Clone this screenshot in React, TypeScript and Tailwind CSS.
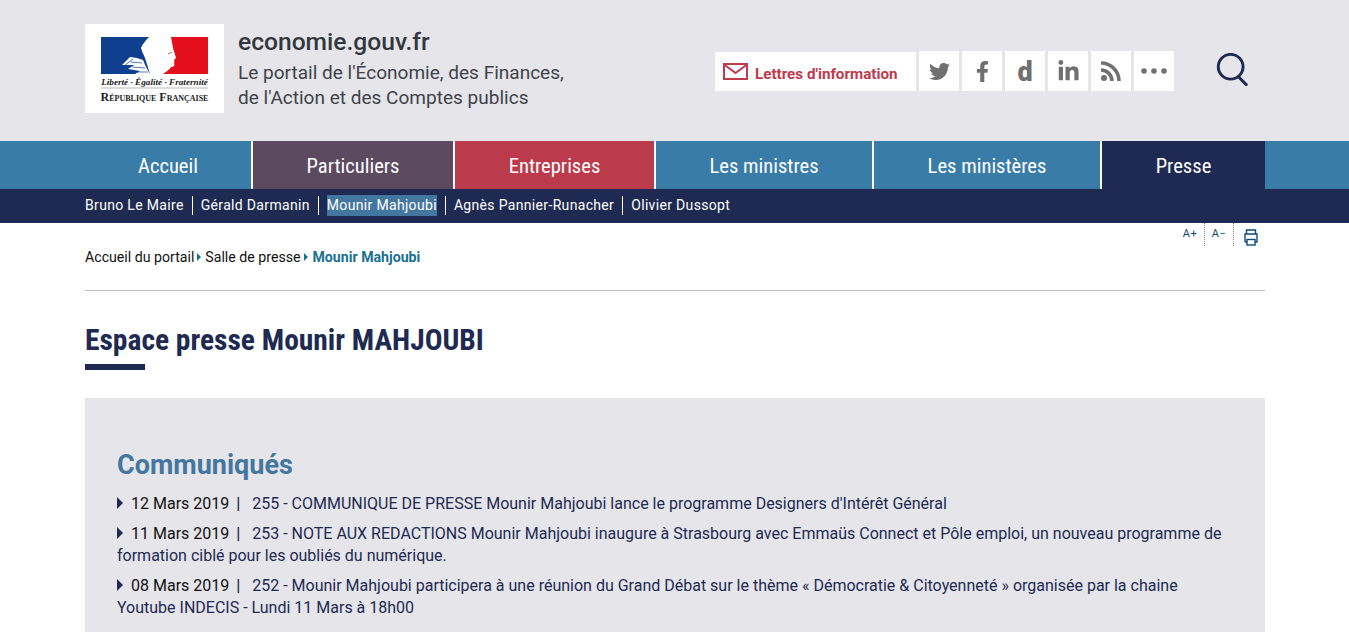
import { FaTwitter, FaFacebookF, FaLinkedinIn } from "react-icons/fa";

const navItems = [
  { label: "Accueil", width: "w-[166px]", bg: "bg-[#3a7ca8]" },
  { label: "Particuliers", width: "w-[202px]", bg: "bg-[#5c4a60]" },
  { label: "Entreprises", width: "w-[201px]", bg: "bg-[#bb3b4c]" },
  { label: "Les ministres", width: "w-[218px]", bg: "bg-[#3a7ca8]" },
  { label: "Les ministères", width: "w-[228px]", bg: "bg-[#3a7ca8]" },
  { label: "Presse", width: "w-[165px]", bg: "bg-[#1e2a52]" },
];

const subItems = ["Bruno Le Maire", "Gérald Darmanin", "Mounir Mahjoubi", "Agnès Pannier-Runacher", "Olivier Dussopt"];

const Logo = () => (
  <div className="w-[139px] h-[89px] bg-white flex flex-col items-center pt-[13px] shrink-0">
    <svg width="107" height="37" viewBox="0 0 107 37">
      <rect width="107" height="37" fill="#fff" />
      <path d="M0 0H48C44 4 41 8 40 11C41 15 43 18 44 21L49 37H0Z" fill="#0f3f8f" />
      <path d="M70 0H107V37H62C66 34 69 32 70 30C73 30 74 28 73 26C74 25 73 24 73 23L75 21L72 11Z" fill="#e30f1a" />
      <path d="M21 28L29 20L36 21L42 23L45 30L49 37H34L39 34L27 32L33 28Z" fill="#fff" />
      <path d="M23 29L32 22M30 25L41 26M31 30L44 31M36 35L47 35" stroke="#0f3f8f" strokeWidth="0.7" fill="none" />
      <path d="M67 17L71 15" stroke="#9a9a9a" strokeWidth="1.2" />
    </svg>
    <div className="mt-[2px] w-[107px] h-[13px] border-b-2 border-[#dcdcdc] text-[9.2px] leading-[12px] italic font-bold text-[#222] text-center whitespace-nowrap font-['Liberation_Serif',serif]">
      Liberté · Égalité · Fraternité
    </div>
    <div className="mt-[2px] text-[12px] leading-[13px] font-bold text-[#222] whitespace-nowrap [font-variant:small-caps] font-['Liberation_Serif',serif]">
      République Française
    </div>
  </div>
);

const SocialBox = ({ children }: { children: React.ReactNode }) => (
  <div className="w-10 h-10 bg-white flex items-center justify-center text-[#707070]">{children}</div>
);

const Communique = ({ date, text }: { date: string; text: string }) => (
  <p className="text-base leading-[22px] text-[#1e2a52] mb-2">
    <span className="inline-block align-[0px] w-0 h-0 border-y-[6px] border-y-transparent border-l-[6px] border-l-[#1e2a52] mr-2" />
    <span className="text-[#111]">{date}</span>
    <span className="font-bold ml-[7px] mr-[8px]">|</span> {text}
  </p>
);

export default function App() {
  return (
    <div className="h-[632px] overflow-hidden bg-white font-['Roboto',sans-serif]">
      <header className="h-[141px] bg-[#e5e5ea] pl-[85px] pt-6 flex">
        <Logo />
        <div className="ml-[14px] pt-[3px] w-[380px]">
          <div className="text-[24.6px] leading-[30px] font-medium text-[#33373d]">economie.gouv.fr</div>
          <div className="text-[19.05px] leading-[25px] text-[#3f4349] mt-[3px]">
            Le portail de l'Économie, des Finances,
            <br />
            de l'Action et des Comptes publics
          </div>
        </div>
        <div className="ml-[97px] mt-[27px] flex gap-[3px] items-start h-10">
          <div className="w-[201px] h-[39px] mt-px bg-white flex items-center pl-2">
            <svg width="25" height="17" viewBox="0 0 25 17" fill="none" stroke="#c0394d" strokeWidth="2">
              <rect x="1" y="1" width="23" height="15" />
              <path d="M1 1.5L12.5 10L24 1.5" />
            </svg>
            <span className="ml-[7px] text-[15.2px] font-bold text-[#c0394d] pt-[6px]">Lettres d'information</span>
          </div>
          <SocialBox><FaTwitter size={21} /></SocialBox>
          <SocialBox><FaFacebookF size={21} /></SocialBox>
          <SocialBox><span className="text-[27px] font-black leading-none mt-[3px]">d</span></SocialBox>
          <SocialBox><FaLinkedinIn size={23} /></SocialBox>
          <SocialBox>
            <svg width="20" height="20" viewBox="0 0 20 20" fill="none" stroke="#707070" strokeWidth="3.6">
              <circle cx="3" cy="17" r="3" fill="#707070" stroke="none" />
              <path d="M0 9A11 11 0 0 1 11 20" />
              <path d="M0 2A18 18 0 0 1 18 20" />
            </svg>
          </SocialBox>
          <SocialBox>
            <svg width="26" height="6" viewBox="0 0 26 6" fill="#707070">
              <circle cx="3" cy="3" r="2.8" />
              <circle cx="13" cy="3" r="2.8" />
              <circle cx="23" cy="3" r="2.8" />
            </svg>
          </SocialBox>
          <svg className="ml-[39px] mt-[2px]" width="33" height="33" viewBox="0 0 36 36" fill="none" stroke="#1e2a52" strokeWidth="3.2">
            <circle cx="16" cy="15" r="13.5" />
            <path d="M24.5 26L33 34.5" strokeLinecap="round" />
          </svg>
        </div>
      </header>

      <nav className="h-12 bg-[#3a7ca8] pl-[85px] flex">
        {navItems.map((item, i) => (
          <div
            key={item.label}
            className={`${item.width} ${item.bg} ${i > 0 ? "border-l-2 border-white" : ""} flex items-center justify-center pt-[2px] text-white text-[20.6px] [font-stretch:condensed]`}
          >
            {item.label}
          </div>
        ))}
      </nav>

      <div className="h-[34px] bg-[#1e2a52] pl-[85px] flex items-center pb-[2px]">
        {subItems.map((label, i) => (
          <div key={label} className={`flex items-center h-[19px] ${i > 0 ? "border-l border-white ml-2 pl-2" : ""}`}>
            <span className={`text-sm leading-[21px] text-white tracking-[0.33px] ${label === "Mounir Mahjoubi" ? "bg-[#44779f]" : ""}`}>{label}</span>
          </div>
        ))}
      </div>

      <div className="w-[1180px] ml-[85px]">
        <div className="relative h-[68px] border-b border-[#bdbdbd] pt-[1px] text-[14.15px] leading-5 text-[#111] flex items-center">
          <span>Accueil du portail</span>
          <span className="w-0 h-0 border-y-4 border-y-transparent border-l-4 border-l-[#19708f] ml-[3px] mr-1" />
          <span>Salle de presse</span>
          <span className="w-0 h-0 border-y-4 border-y-transparent border-l-4 border-l-[#19708f] mx-1" />
          <span className="font-bold text-[#19708f]">Mounir Mahjoubi</span>
          <div className="absolute top-0 right-0 flex h-[23px] text-[#0d4a78]">
            <div className="w-[29px] border-r border-dotted border-[#888] text-[11px] tracking-[0.5px] leading-[22px] text-center">A+</div>
            <div className="w-[29px] border-r border-dotted border-[#888] text-[11px] tracking-[0.5px] leading-[22px] text-center">A−</div>
            <div className="w-[31px] flex justify-center pt-[6px] pl-[2px]">
              <svg width="14" height="17" viewBox="0 0 14 17" fill="none" stroke="#0d4a78" strokeWidth="1.4">
                <path d="M2.5 5V1H11.5V5M1 13V5H13V13H11M3 13H1" />
                <rect x="3" y="10.5" width="8" height="5.5" />
              </svg>
            </div>
          </div>
        </div>

        <h1 className="mt-[29px] text-[29.5px] leading-10 font-bold text-[#1e2a52] [font-stretch:condensed]">
          Espace presse Mounir MAHJOUBI
        </h1>
        <div className="w-[60px] h-[6px] bg-[#1e2a52] mt-1" />

        <section className="mt-[28px] bg-[#e5e5ea] px-8 pt-[49px] pb-6">
          <h2 className="text-[27px] leading-9 font-bold text-[#44779f] mb-[10px]">Communiqués</h2>
          <Communique date="12 Mars 2019" text="255 - COMMUNIQUE DE PRESSE Mounir Mahjoubi lance le programme Designers d'Intérêt Général" />
          <Communique date="11 Mars 2019" text="253 - NOTE AUX REDACTIONS Mounir Mahjoubi inaugure à Strasbourg avec Emmaüs Connect et Pôle emploi, un nouveau programme de formation ciblé pour les oubliés du numérique." />
          <Communique date="08 Mars 2019" text="252 - Mounir Mahjoubi participera à une réunion du Grand Débat sur le thème « Démocratie & Citoyenneté » organisée par la chaine Youtube INDECIS - Lundi 11 Mars à 18h00" />
        </section>
      </div>
    </div>
  );
}
